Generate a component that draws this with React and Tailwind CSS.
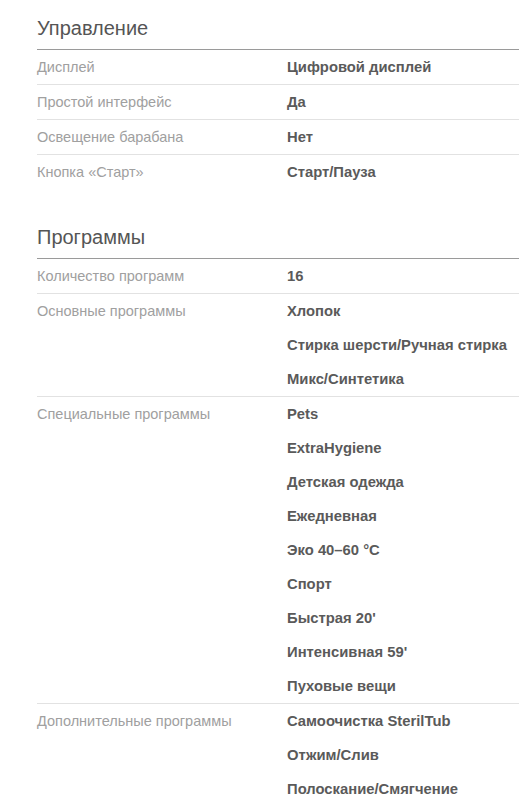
const sections = [
  {
    title: 'Управление',
    rows: [
      ['Дисплей', ['Цифровой дисплей']],
      ['Простой интерфейс', ['Да']],
      ['Освещение барабана', ['Нет']],
      ['Кнопка «Старт»', ['Старт/Пауза']],
    ],
  },
  {
    title: 'Программы',
    rows: [
      ['Количество программ', ['16']],
      ['Основные программы', ['Хлопок', 'Стирка шерсти/Ручная стирка', 'Микс/Синтетика']],
      [
        'Специальные программы',
        [
          'Pets',
          'ExtraHygiene',
          'Детская одежда',
          'Ежедневная',
          'Эко 40–60 °C',
          'Спорт',
          'Быстрая 20\'',
          'Интенсивная 59\'',
          'Пуховые вещи',
        ],
      ],
      ['Дополнительные программы', ['Самоочистка SterilTub', 'Отжим/Слив', 'Полоскание/Смягчение']],
    ],
  },
]

function Section({ title, rows }) {
  return (
    <section>
      <h2 className="pt-[14px] pb-[7px] text-[20px] leading-[28px] text-[#555] border-b border-[#9a9a9a]">
        {title}
      </h2>
      {rows.map(([label, values], i) => (
        <div key={label} className={`flex ${i > 0 ? 'border-t border-[#e2e2e2]' : ''}`}>
          <div className="w-[250px] shrink-0 text-[14.5px] leading-[34px] text-[#a0a0a0]">{label}</div>
          <div className="flex flex-col">
            {values.map((v) => (
              <div key={v} className="text-[14.8px] leading-[34px] font-bold text-[#5a5a5a]">
                {v}
              </div>
            ))}
          </div>
        </div>
      ))}
    </section>
  )
}

export default function App() {
  return (
    <div className="min-h-screen bg-white pl-[37px] font-['Liberation_Sans',Arial,sans-serif]">
      <div className="flex flex-col gap-[20px]">
        {sections.map((s) => (
          <Section key={s.title} {...s} />
        ))}
      </div>
    </div>
  )
}
